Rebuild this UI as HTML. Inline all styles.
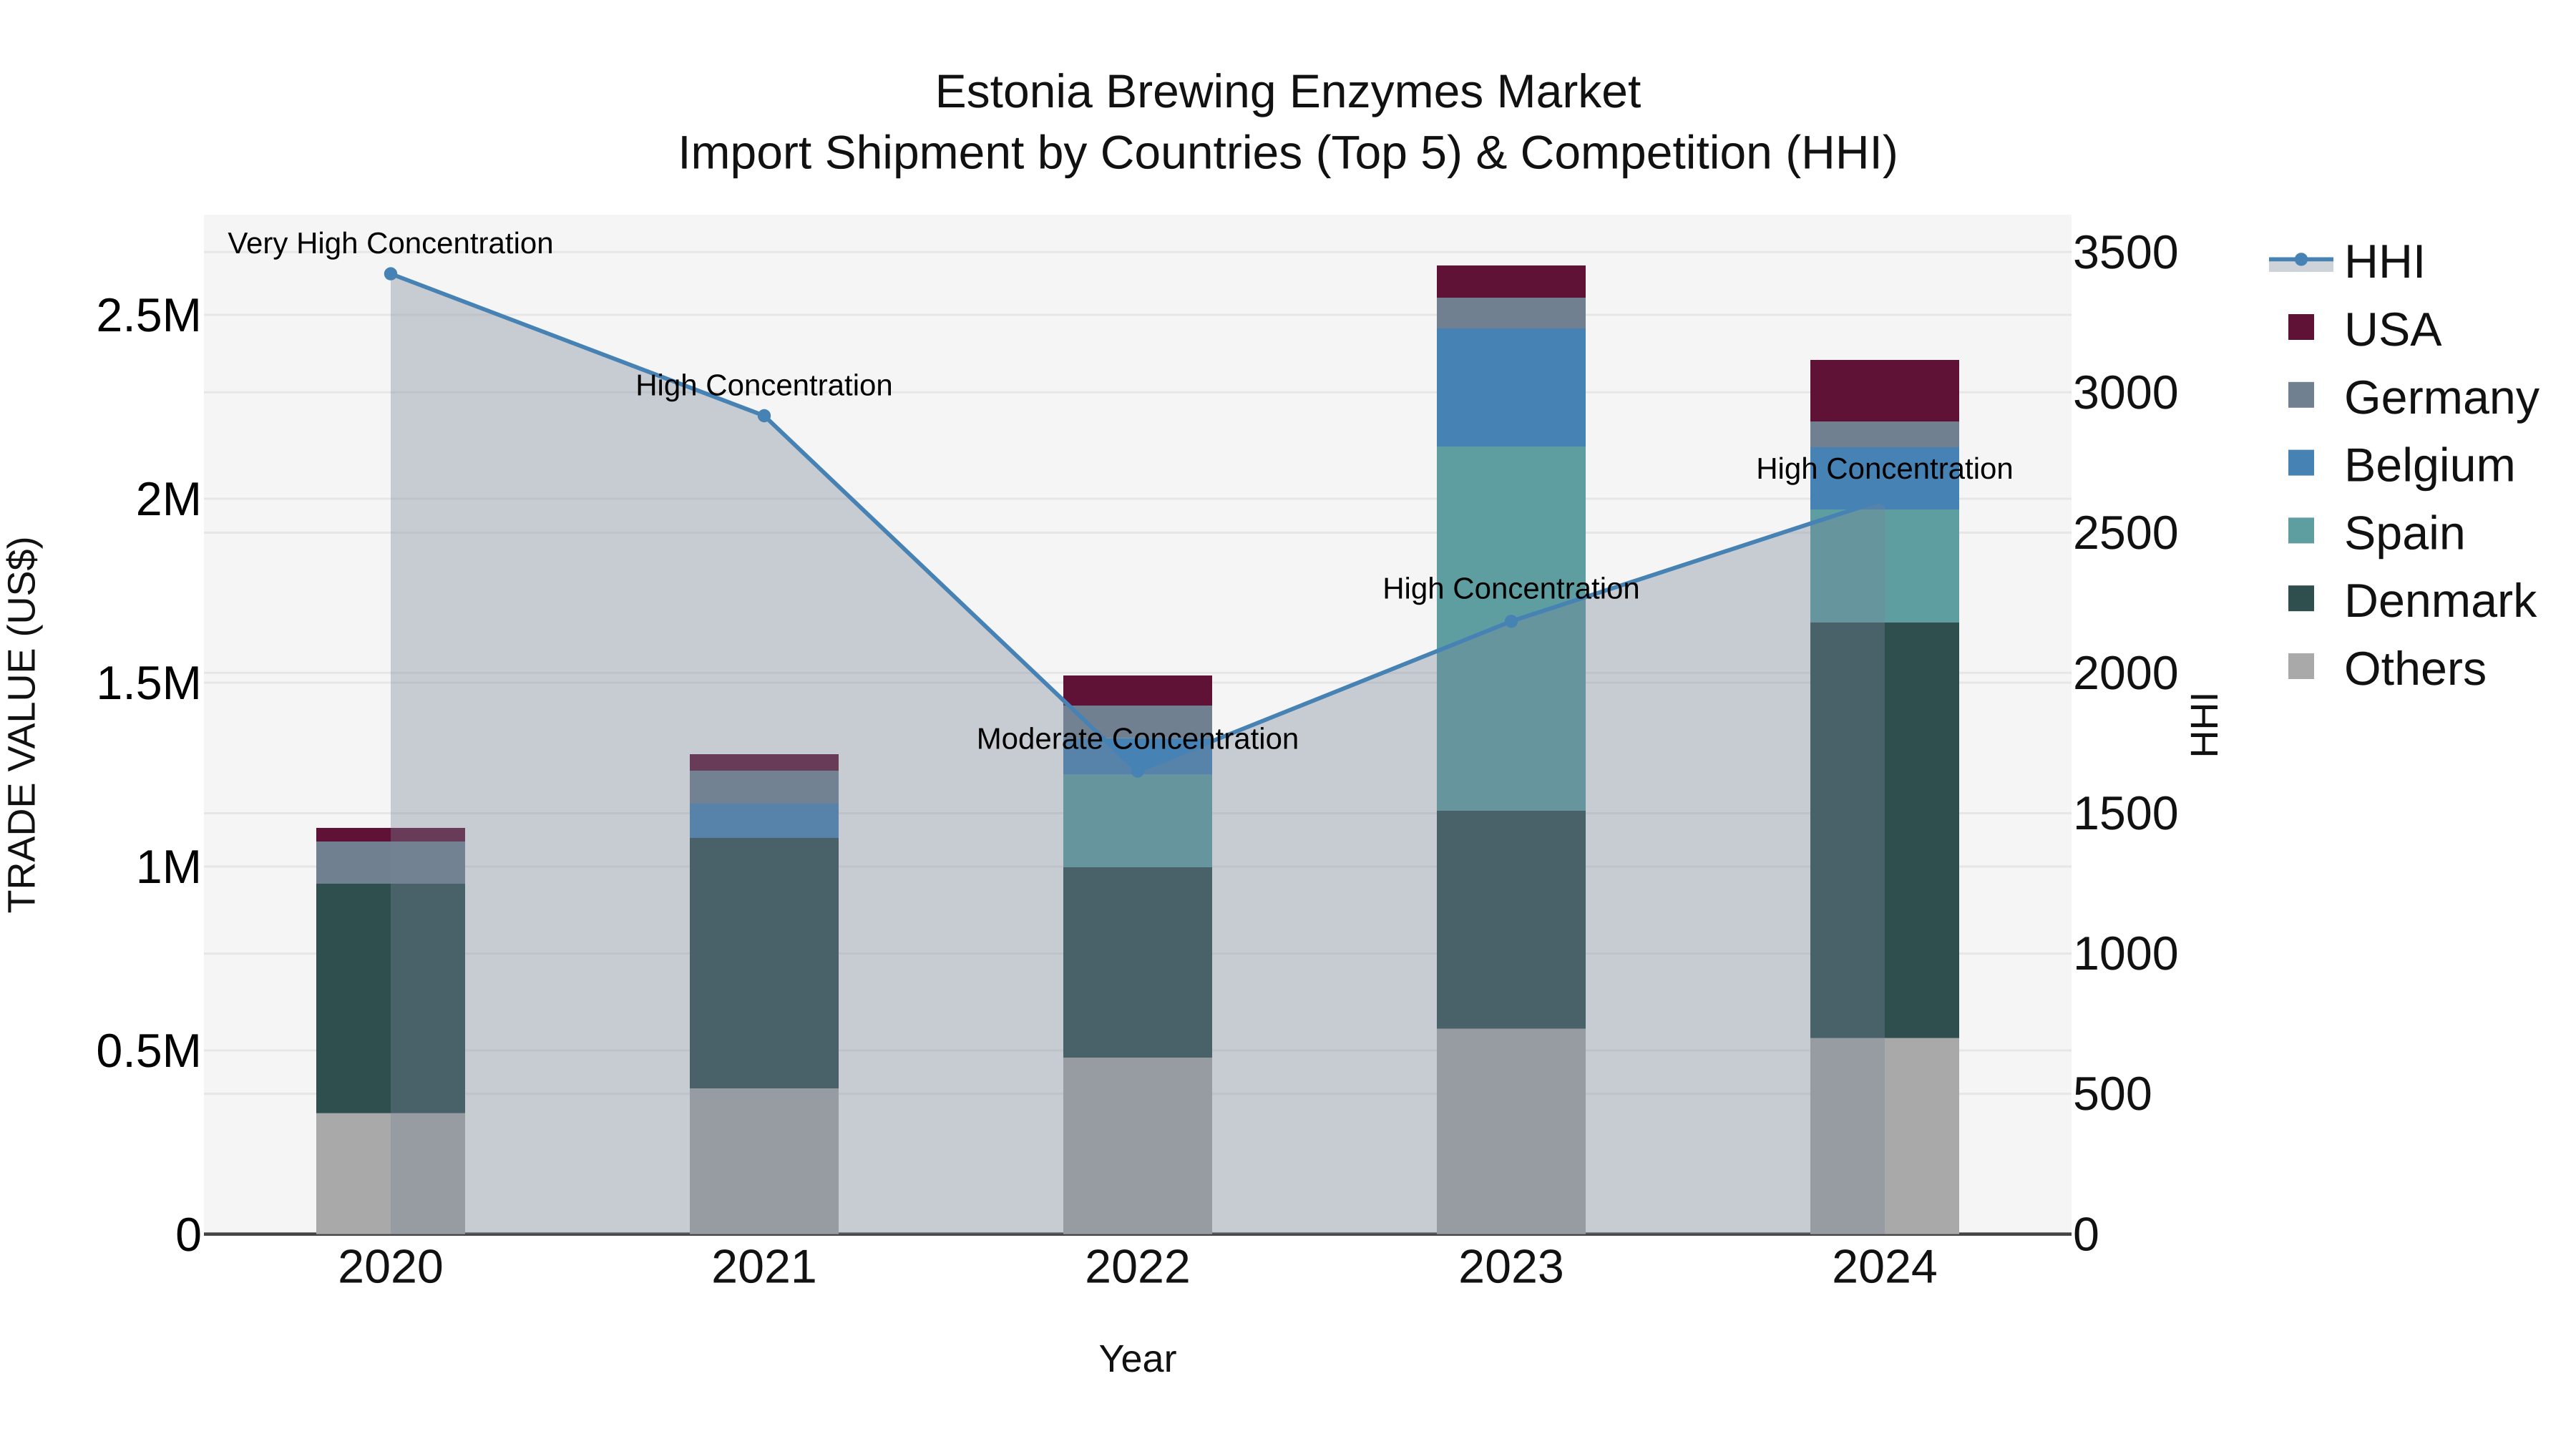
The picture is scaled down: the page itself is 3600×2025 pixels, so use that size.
<!DOCTYPE html>
<html lang="en">
<head>
<meta charset="utf-8">
<title>Estonia Brewing Enzymes Market</title>
<style>
html,body{margin:0;padding:0;background:#fff;width:3600px;height:2025px;overflow:hidden}
svg{display:block}
text{font-family:"Liberation Sans",Arial,sans-serif;text-rendering:geometricPrecision}
.t{font-size:66.4px;fill:#111}
.l{font-size:66.4px;fill:#000}
.a{font-size:42px;fill:#000;text-anchor:middle}
.h{font-size:66px;fill:#111;text-anchor:middle}
.g{stroke:#e6e6e6;stroke-width:3;fill:none}
.ax{font-size:54px;fill:#111;text-anchor:middle}
</style>
</head>
<body>
<svg width="3600" height="2025" viewBox="0 0 3600 2025" xmlns="http://www.w3.org/2000/svg">
<rect width="3600" height="2025" fill="#fff"/>
<rect x="285" y="300" width="2610" height="1424.7" fill="#f5f5f5"/>

<!-- gridlines right axis -->
<path class="g" d="M285 352.2H2895M285 548.3H2895M285 744.4H2895M285 940.4H2895M285 1136.5H2895M285 1332.6H2895M285 1528.6H2895"/>
<!-- gridlines left axis -->
<path class="g" d="M285 440H2895M285 697H2895M285 954H2895M285 1211H2895M285 1468H2895"/>
<!-- zero line -->
<path d="M285 1724.7H2895" stroke="#444" stroke-width="4.6" fill="none"/>

<!-- bars 2020 -->
<rect x="442" y="1555.7" width="208" height="169" fill="#a9a9a9"/>
<rect x="442" y="1235" width="208" height="320.7" fill="#2f4f4f"/>
<rect x="442" y="1176" width="208" height="59" fill="#708090"/>
<rect x="442" y="1157" width="208" height="19" fill="#601236"/>
<!-- bars 2021 -->
<rect x="964" y="1521" width="208" height="203.7" fill="#a9a9a9"/>
<rect x="964" y="1171" width="208" height="350" fill="#2f4f4f"/>
<rect x="964" y="1123" width="208" height="48" fill="#4682b4"/>
<rect x="964" y="1077" width="208" height="46" fill="#708090"/>
<rect x="964" y="1054" width="208" height="23" fill="#601236"/>
<!-- bars 2022 -->
<rect x="1486" y="1478" width="208" height="246.7" fill="#a9a9a9"/>
<rect x="1486" y="1212" width="208" height="266" fill="#2f4f4f"/>
<rect x="1486" y="1082.7" width="208" height="129.3" fill="#5f9ea0"/>
<rect x="1486" y="1031.7" width="208" height="51" fill="#4682b4"/>
<rect x="1486" y="986" width="208" height="45.7" fill="#708090"/>
<rect x="1486" y="944" width="208" height="42" fill="#601236"/>
<!-- bars 2023 -->
<rect x="2008" y="1437.5" width="208" height="287.2" fill="#a9a9a9"/>
<rect x="2008" y="1133" width="208" height="304.5" fill="#2f4f4f"/>
<rect x="2008" y="624" width="208" height="509" fill="#5f9ea0"/>
<rect x="2008" y="459" width="208" height="165" fill="#4682b4"/>
<rect x="2008" y="416" width="208" height="43" fill="#708090"/>
<rect x="2008" y="371" width="208" height="45" fill="#601236"/>
<!-- bars 2024 -->
<rect x="2530" y="1450.7" width="208" height="274" fill="#a9a9a9"/>
<rect x="2530" y="870" width="208" height="580.7" fill="#2f4f4f"/>
<rect x="2530" y="712" width="208" height="158" fill="#5f9ea0"/>
<rect x="2530" y="625" width="208" height="87" fill="#4682b4"/>
<rect x="2530" y="589" width="208" height="36" fill="#708090"/>
<rect x="2530" y="503" width="208" height="86" fill="#601236"/>

<!-- HHI area + line -->
<polygon points="546,382.6 1068,581 1590,1077.5 2112,868.3 2634,697.7 2634,1724.7 546,1724.7" fill="rgb(120,132,152)" fill-opacity="0.36"/>
<polyline points="546,382.6 1068,581 1590,1077.5 2112,868.3 2634,697.7" fill="none" stroke="#4682b4" stroke-width="5.8" stroke-linejoin="round"/>
<circle cx="546" cy="382.6" r="9.2" fill="#4682b4"/>
<circle cx="1068" cy="581" r="9.2" fill="#4682b4"/>
<circle cx="1590" cy="1077.5" r="9.2" fill="#4682b4"/>
<circle cx="2112" cy="868.3" r="9.2" fill="#4682b4"/>
<circle cx="2634" cy="697.7" r="9.2" fill="#4682b4"/>

<!-- annotations -->
<text class="a" x="546" y="354">Very High Concentration</text>
<text class="a" x="1068" y="552.7">High Concentration</text>
<text class="a" x="1590" y="1046.7">Moderate Concentration</text>
<text class="a" x="2112" y="836.7">High Concentration</text>
<text class="a" x="2634" y="669">High Concentration</text>

<!-- title -->
<text class="h" x="1800" y="150">Estonia Brewing Enzymes Market</text>
<text class="h" x="1800" y="235.7">Import Shipment by Countries (Top 5) &amp; Competition (HHI)</text>

<!-- left ticks -->
<g class="l" text-anchor="end">
<text x="282" y="463">2.5M</text>
<text x="282" y="720">2M</text>
<text x="282" y="977">1.5M</text>
<text x="282" y="1234">1M</text>
<text x="282" y="1491">0.5M</text>
<text x="282" y="1748">0</text>
</g>
<!-- right ticks -->
<g class="t" text-anchor="start">
<text x="2897" y="375">3500</text>
<text x="2897" y="571">3000</text>
<text x="2897" y="767">2500</text>
<text x="2897" y="963">2000</text>
<text x="2897" y="1159">1500</text>
<text x="2897" y="1355">1000</text>
<text x="2897" y="1551">500</text>
<text x="2897" y="1747.5">0</text>
</g>
<!-- x ticks -->
<g class="t" text-anchor="middle">
<text x="546" y="1792.4">2020</text>
<text x="1068" y="1792.4">2021</text>
<text x="1590" y="1792.4">2022</text>
<text x="2112" y="1792.4">2023</text>
<text x="2634" y="1792.4">2024</text>
</g>

<!-- axis titles -->
<text class="ax" x="1590" y="1917">Year</text>
<text class="ax" transform="translate(48.3 1013) rotate(-90)">TRADE VALUE (US$)</text>
<text class="ax" transform="translate(3099 1013) rotate(-90)">HHI</text>

<!-- legend -->
<rect x="3171" y="362.4" width="90" height="17.6" fill="rgb(120,132,152)" fill-opacity="0.36"/>
<path d="M3171 362.4H3261" stroke="#4682b4" stroke-width="5.8" fill="none"/>
<circle cx="3216" cy="362.4" r="9.2" fill="#4682b4"/>
<rect x="3198" y="439" width="36" height="36" fill="#601236"/>
<rect x="3198" y="533.8" width="36" height="36" fill="#708090"/>
<rect x="3198" y="628.6" width="36" height="36" fill="#4682b4"/>
<rect x="3198" y="723.4" width="36" height="36" fill="#5f9ea0"/>
<rect x="3198" y="818.2" width="36" height="36" fill="#2f4f4f"/>
<rect x="3198" y="913" width="36" height="36" fill="#a9a9a9"/>
<g class="t">
<text x="3276" y="388">HHI</text>
<text x="3276" y="483">USA</text>
<text x="3276" y="577.8">Germany</text>
<text x="3276" y="672.6">Belgium</text>
<text x="3276" y="767.4">Spain</text>
<text x="3276" y="862.2">Denmark</text>
<text x="3276" y="957">Others</text>
</g>
</svg>
</body>
</html>
